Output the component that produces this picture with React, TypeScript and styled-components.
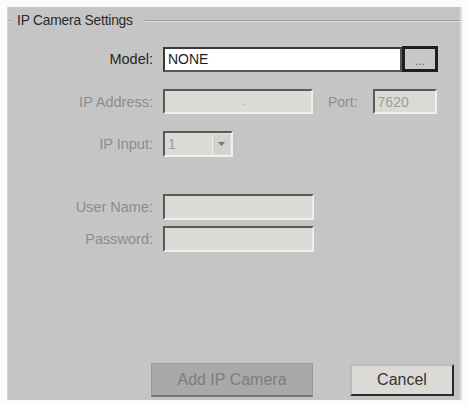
import React from "react";
import styled, { createGlobalStyle } from "styled-components";

const Global = createGlobalStyle`
  html, body { margin: 0; padding: 0; background: #ffffff; }
  body { font-family: "Liberation Sans", Arial, sans-serif; }
`;

const Page = styled.div`
  width: 468px;
  height: 404px;
  padding: 7px 6px 4px 7px;
  box-sizing: border-box;
  background: #fbfbfb;
`;

const Frame = styled.div`
  height: 100%;
  background: #c5c5c5;
  border-right: 2px solid #dedede;
  border-left: 1px solid #d2d2d2;
  display: flex;
  flex-direction: column;
  box-sizing: border-box;
`;

const Legend = styled.div`
  display: flex;
  align-items: center;
  height: 27px;
  font-size: 13.8px;
  color: #2a2a2a;
`;

const Rule = styled.div<{ $w?: number }>`
  height: 0;
  border-top: 1px solid #999;
  border-bottom: 1px solid #e2e2e2;
  ${(p) => (p.$w ? `width: ${p.$w}px;` : "flex: 1;")}
`;

const LegendText = styled.span`
  padding: 0 12px 0 6px;
  letter-spacing: -0.2px;
`;

const Form = styled.div`
  display: flex;
  flex-direction: column;
  padding-top: 12px;
`;

const Row = styled.div<{ $mt?: number }>`
  display: flex;
  align-items: center;
  margin-top: ${(p) => p.$mt ?? 0}px;
`;

const Label = styled.span<{ $on?: boolean }>`
  width: 145px;
  flex: none;
  text-align: right;
  font-size: 14.5px;
  color: ${(p) => (p.$on ? "#262626" : "#8c8c8c")};
  margin-right: 10px;
`;

const Field = styled.div<{ $w: number; $h?: number; $on?: boolean }>`
  width: ${(p) => p.$w}px;
  height: ${(p) => p.$h ?? 25}px;
  box-sizing: border-box;
  background: ${(p) => (p.$on ? "#ffffff" : "#dcdad5")};
  border: 2px solid ${(p) => (p.$on ? "#3a3a3a" : "#5a5a5a")};
  border-right-color: ${(p) => (p.$on ? "#555" : "#efefef")};
  border-bottom-color: ${(p) => (p.$on ? "#555" : "#efefef")};
  display: flex;
  align-items: center;
  padding-left: 3px;
  font-size: 14px;
  color: ${(p) => (p.$on ? "#1e1e1e" : "#9a9a9a")};
`;

const DotsButton = styled.div`
  width: 36px;
  height: 26px;
  box-sizing: border-box;
  border: 3px solid #1f1f1f;
  background: #c8c8c8;
  display: flex;
  align-items: center;
  justify-content: center;
  font-size: 12px;
  color: #666;
  padding-top: 3px;
`;

const PortLabel = styled.span`
  font-size: 14px;
  color: #8c8c8c;
  margin: 0 15px 0 15px;
`;

const Arrow = styled.div`
  width: 17px;
  height: 19px;
  margin-left: auto;
  margin-right: 1px;
  background: #d4d2cd;
  border-left: 1px solid #eee;
  display: flex;
  align-items: center;
  justify-content: center;
`;

const Dot = styled.span`
  margin-left: 74px;
  font-size: 10px;
`;

const Spacer = styled.div`
  flex: 1;
`;

const Buttons = styled.div`
  display: flex;
  align-items: center;
  padding: 0 6px 3px 143px;
`;

const Btn = styled.div<{ $primary?: boolean; $w: number }>`
  width: ${(p) => p.$w}px;
  height: ${(p) => (p.$primary ? 34 : 32)}px;
  box-sizing: border-box;
  display: flex;
  align-items: center;
  justify-content: center;
  font-size: 16px;
  ${(p) =>
    p.$primary
      ? `background: #a9a9a9; color: #7d7d7d; border: 1px solid #999; border-bottom: 2px solid #777;`
      : `background: #dcdad6; color: #333; border: 2px solid #2a2a2a; border-top-color: #bbb; border-left-color: #bbb;`}
`;

export default function App() {
  return (
    <>
      <Global />
      <Page>
        <Frame>
          <Legend>
            <Rule $w={3} />
            <LegendText>IP Camera Settings</LegendText>
            <Rule />
          </Legend>
          <Form>
            <Row>
              <Label $on>Model:</Label>
              <Field $w={239} $on>
                NONE
              </Field>
              <DotsButton>...</DotsButton>
            </Row>
            <Row $mt={17}>
              <Label>IP Address:</Label>
              <Field $w={150}>
                <Dot>.</Dot>
              </Field>
              <PortLabel>Port:</PortLabel>
              <Field $w={64}>7620</Field>
            </Row>
            <Row $mt={17}>
              <Label>IP Input:</Label>
              <Field $w={70} $h={26}>
                1
                <Arrow>
                  <svg width="9" height="6" viewBox="0 0 9 6">
                    <path d="M1 1 L4.5 5 L8 1 Z" fill="#777" />
                  </svg>
                </Arrow>
              </Field>
            </Row>
            <Row $mt={37}>
              <Label>User Name:</Label>
              <Field $w={151} $h={26} />
            </Row>
            <Row $mt={6}>
              <Label>Password:</Label>
              <Field $w={151} $h={26} />
            </Row>
          </Form>
          <Spacer />
          <Buttons>
            <Btn $primary $w={162}>Add IP Camera</Btn>
            <Spacer />
            <Btn $w={104}>Cancel</Btn>
          </Buttons>
        </Frame>
      </Page>
    </>
  );
}
